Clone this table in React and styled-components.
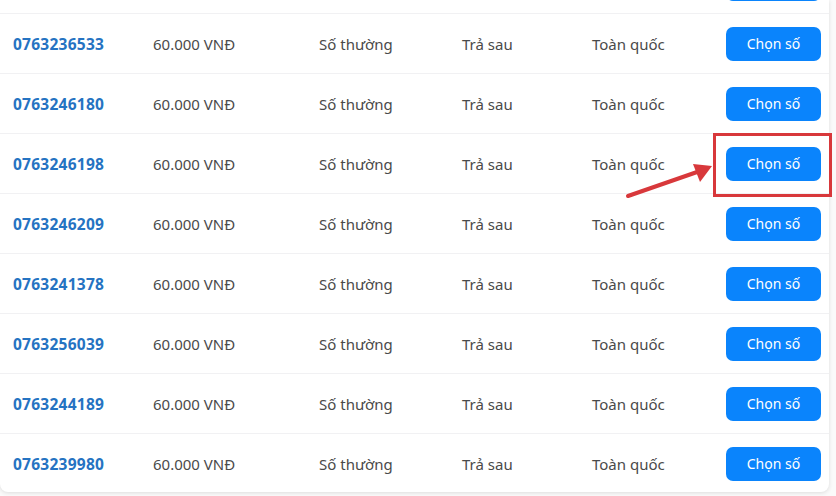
import styled, { createGlobalStyle } from "styled-components";

const GlobalStyle = createGlobalStyle`
  html, body {
    margin: 0;
    background: #f4f4f5;
  }
  body {
    font-family: "Noto Sans", "Open Sans", sans-serif;
  }
`;

const Page = styled.div`
  position: relative;
  width: 836px;
  height: 496px;
  overflow: hidden;
  background: #fafafa;
`;

const Card = styled.div`
  width: 829px;
  height: 492px;
  background: #fff;
  border-radius: 0 0 8px 8px;
  box-shadow: 0 1px 4px rgba(0, 0, 0, 0.12);
  overflow: hidden;
`;

const Row = styled.div`
  display: grid;
  grid-template-columns: 140px 166px 143px 130px 134px 95px;
  align-items: center;
  height: 60px;
  padding-left: 13px;
  border-bottom: 1px solid #f1f1f3;
  box-sizing: border-box;
  font-size: 15px;
  color: #4a4a4a;
`;

/* the row above the view: only the bottom of its button shows */
const CutRow = styled.div`
  display: flex;
  justify-content: flex-end;
  align-items: flex-end;
  height: 14px;
  padding-right: 8px;
  border-bottom: 1px solid #f1f1f3;
  box-sizing: border-box;
  overflow: hidden;
`;

const ButtonEdge = styled.div`
  width: 95px;
  height: 10px;
  margin-bottom: 12px;
  border-radius: 0 0 7px 7px;
  background: #0a84fc;
`;

const Phone = styled.span`
  font-weight: 700;
  font-size: 15.5px;
  color: #2573c2;
  letter-spacing: 0.25px;
`;

const Cell = styled.span`
  white-space: nowrap;
`;

const PickButton = styled.button`
  height: 34px;
  width: 95px;
  border: none;
  border-radius: 7px;
  background: #0a84fc;
  color: #fff;
  font-family: inherit;
  font-size: 14px;
  padding: 0;
  cursor: pointer;
`;

const Highlight = styled.div`
  position: absolute;
  left: 713px;
  top: 133px;
  width: 119px;
  height: 64px;
  border: 3px solid #d8383b;
  box-sizing: border-box;
`;

const Arrow = styled.svg`
  position: absolute;
  left: 620px;
  top: 155px;
`;

const rows = [
  "0763236533",
  "0763246180",
  "0763246198",
  "0763246209",
  "0763241378",
  "0763256039",
  "0763244189",
  "0763239980",
];

export default function App() {
  return (
    <Page>
      <GlobalStyle />
      <Card>
        <CutRow>
          <ButtonEdge />
        </CutRow>
        {rows.map((num) => (
          <Row key={num}>
            <Phone>{num}</Phone>
            <Cell>60.000 VNĐ</Cell>
            <Cell>Số thường</Cell>
            <Cell>Trả sau</Cell>
            <Cell>Toàn quốc</Cell>
            <PickButton>Chọn số</PickButton>
          </Row>
        ))}
      </Card>
      <Highlight />
      <Arrow width="100" height="50" viewBox="0 0 100 50">
        <line x1="8" y1="41" x2="80" y2="16" stroke="#d8383b" strokeWidth="4" strokeLinecap="round" />
        <polygon points="92,11 73,9 80,27" fill="#d8383b" />
      </Arrow>
    </Page>
  );
}
